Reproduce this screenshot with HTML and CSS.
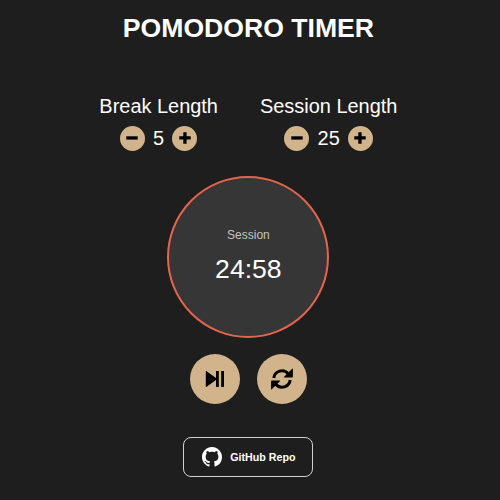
FILE: index.html
```html
<!DOCTYPE html>
<html lang="en">
<head>
<meta charset="utf-8">
<title>Pomodoro Timer</title>
<link rel="stylesheet" href="styles.css">
</head>
<body>
<main class="app">
  <h1 class="title">POMODORO TIMER</h1>
  <section class="settings">
    <div class="setting">
      <div class="setting-label">Break Length</div>
      <div class="stepper">
        <button class="step" aria-label="Decrease break"><svg viewBox="0 0 12 12"><path d="M.3 4.3h11.4v3.3H.3z"/></svg></button>
        <span class="value">5</span>
        <button class="step" aria-label="Increase break"><svg viewBox="0 0 12 12"><path d="M4.3.3h3.3v4h4.1v3.3H7.6v4.1H4.3V7.6H.3V4.3h4z"/></svg></button>
      </div>
    </div>
    <div class="setting">
      <div class="setting-label">Session Length</div>
      <div class="stepper">
        <button class="step" aria-label="Decrease session"><svg viewBox="0 0 12 12"><path d="M.3 4.3h11.4v3.3H.3z"/></svg></button>
        <span class="value">25</span>
        <button class="step" aria-label="Increase session"><svg viewBox="0 0 12 12"><path d="M4.3.3h3.3v4h4.1v3.3H7.6v4.1H4.3V7.6H.3V4.3h4z"/></svg></button>
      </div>
    </div>
  </section>
  <section class="clock">
    <div class="clock-label">Session</div>
    <div class="time">24:58</div>
  </section>
  <div class="controls">
    <button class="control" aria-label="Start or pause"><svg class="play" viewBox="0 0 20 16"><path d="M.8.5Q.8-.4 1.6.3L11 7V0h2.8v16H11V9L1.6 15.7Q.8 16.4.8 15.5zM16.2 0H19v16h-2.8z"/></svg></button>
    <button class="control" aria-label="Reset"><svg class="reset" viewBox="0 0 22 22"><path class="arc" d="M2.8 10A8.2 8.2 0 0 1 17.2 5.7M19.2 12A8.2 8.2 0 0 1 4.8 16.3"/><path d="M21.2.8q.7-.7.7.3v7.7q0 .7-.7.7h-7.8q-1 0-.3-.7zM.8 21.2q-.7.7-.7-.3v-7.7q0-.7.7-.7h7.8q1 0 .3.7z"/></svg></button>
  </div>
  <a class="repo"><svg viewBox="0 0 16 16"><path d="M8 0C3.58 0 0 3.58 0 8c0 3.54 2.29 6.53 5.47 7.59.4.07.55-.17.55-.38 0-.19-.01-.82-.01-1.49-2.01.37-2.53-.49-2.69-.94-.09-.23-.48-.94-.82-1.13-.28-.15-.68-.52-.01-.53.63-.01 1.08.58 1.23.82.72 1.21 1.87.87 2.33.66.07-.52.28-.87.51-1.07-1.78-.2-3.64-.89-3.64-3.95 0-.87.31-1.59.82-2.15-.08-.2-.36-1.02.08-2.12 0 0 .67-.21 2.2.82.64-.18 1.32-.27 2-.27s1.36.09 2 .27c1.53-1.04 2.2-.82 2.2-.82.44 1.1.16 1.92.08 2.12.51.56.82 1.27.82 2.15 0 3.07-1.87 3.75-3.65 3.95.29.25.54.73.54 1.48 0 1.07-.01 1.93-.01 2.2 0 .21.15.46.55.38A8.01 8.01 0 0 0 16 8c0-4.42-3.58-8-8-8z"/></svg><span>GitHub Repo</span></a>
</main>
</body>
</html>
```
FILE: styles.css
```css
* { box-sizing: border-box; }
body {
  margin: 0;
  height: 500px;
  overflow: hidden;
  background: #1e1e1e;
  color: #fff;
  font-family: "Liberation Sans", Arial, sans-serif;
}
.app {
  width: 496.8px;
  display: flex;
  flex-direction: column;
  align-items: center;
}
.title {
  margin: 12px 0 0;
  font-size: 26.6px;
  line-height: 32px;
}
.settings {
  display: flex;
  gap: 42px;
  margin-top: 50px;
}
.setting-label {
  font-size: 19.95px;
  line-height: 24px;
}
.stepper {
  display: flex;
  justify-content: center;
  align-items: center;
  gap: 8.2px;
  margin-top: 7.5px;
}
.value { font-size: 19.95px; line-height: 25px; }
.step, .control {
  display: flex;
  align-items: center;
  justify-content: center;
  padding: 0;
  border: 0;
  border-radius: 50%;
  background: #d2b48c;
  color: #000;
}
.step { width: 25px; height: 25px; }
.step svg { width: 12px; height: 12px; }
.clock {
  width: 162px;
  height: 162px;
  margin-top: 25px;
  padding-top: 50px;
  border: 2px solid #e5644c;
  border-radius: 50%;
  background: #363636;
  text-align: center;
}
.clock-label {
  color: #c4c4c4;
  font-size: 12px;
  line-height: 14px;
}
.time {
  margin-top: 11px;
  font-size: 26.6px;
  line-height: 32px;
}
.controls {
  display: flex;
  gap: 16.7px;
  margin-top: 16px;
}
.control { width: 50px; height: 50px; }
.play { width: 20px; height: 16px; }
.reset { width: 22px; height: 22px; }
.arc {
  fill: none;
  stroke: currentColor;
  stroke-width: 3;
}
.repo {
  display: flex;
  align-items: center;
  justify-content: center;
  gap: 8px;
  width: 130px;
  height: 40px;
  margin-top: 33px;
  padding-left: 1px;
  border: 1px solid #d0d0d0;
  border-radius: 8px;
  font-size: 10.7px;
  font-weight: bold;
}
.repo svg { width: 20px; height: 20px; }
svg { fill: currentColor; }
```
